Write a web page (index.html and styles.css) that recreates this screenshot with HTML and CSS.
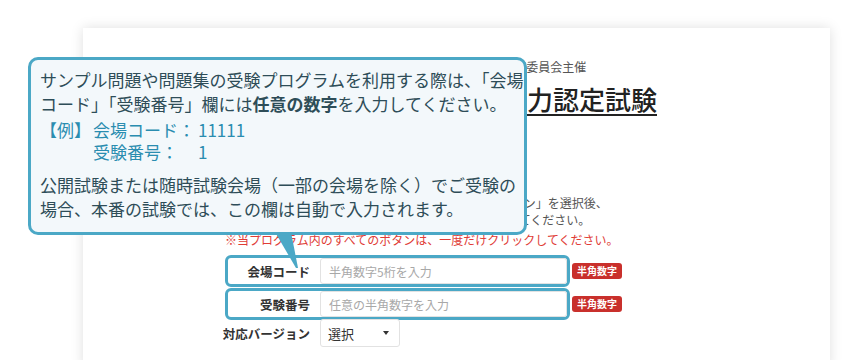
FILE: index.html
```html
<!DOCTYPE html>
<html lang="ja">
<head>
<meta charset="utf-8">
<title>受験プログラム</title>
<link rel="stylesheet" href="styles.css">
</head>
<body>
<div class="page">
  <div class="card">
    <div class="head">
      <p class="sponsor">サーティファイ情報処理能力認定委員会主催</p>
      <h1 class="title"><span>情報処理技術者能力認定試験</span></h1>
    </div>
    <div class="guide">
      <p class="info">「会場コード」「受験番号」を入力して、「対応バージョン」を選択後、<br>画面の内容を確認し、「試験開始」ボタンをクリックしてください。</p>
      <p class="warn">※当プログラム内のすべてのボタンは、一度だけクリックしてください。</p>
    </div>
    <div class="form">
      <div class="row row-first">
        <div class="hl">
          <label class="lbl">会場コード</label>
          <input class="inp" type="text" placeholder="半角数字5桁を入力">
        </div>
        <span class="badge">半角数字</span>
      </div>
      <div class="row">
        <div class="hl">
          <label class="lbl">受験番号</label>
          <input class="inp" type="text" placeholder="任意の半角数字を入力">
        </div>
        <span class="badge">半角数字</span>
      </div>
      <div class="row row-plain">
        <label class="lbl lbl-wide">対応バージョン</label>
        <div class="select"><span>選択</span><span class="caret"></span></div>
      </div>
    </div>
  </div>

  <div class="callout">
    <p class="c-text">サンプル問題や問題集の受験プログラムを利用する際は、「会場<br>コード」「受験番号」欄には<strong>任意の数字</strong>を入力してください。</p>
    <div class="example">
      <span>【例】</span><span>会場コード：</span><span>11111</span>
      <span></span><span>受験番号：</span><span>1</span>
    </div>
    <p class="c-text c-last">公開試験または随時試験会場（一部の会場を除く）でご受験の<br>場合、本番の試験では、この欄は自動で入力されます。</p>
  </div>
  <svg class="tail" width="32" height="38" viewBox="0 0 32 38">
    <polygon points="5,0 21,0 28,36 26,36" fill="#4ba8c6"/>
  </svg>
</div>
</body>
</html>
```

FILE: styles.css
```css
* { box-sizing: border-box; }

html, body {
  margin: 0;
  padding: 0;
  background: #ffffff;
  overflow: hidden;
}

body {
  font-family: "Noto Sans CJK JP", "Noto Sans", sans-serif;
  color: #333;
}

.page {
  position: relative;
  width: 860px;
  height: 360px;
  overflow: hidden;
  padding: 28px 0 0 83px;
}

.card {
  width: 747px;
  height: 340px;
  background: #fff;
  box-shadow: 0 0 12px rgba(0, 0, 0, 0.13);
  padding-top: 31px;
}

.head p, .head h1, .guide p { margin: 0; }

.sponsor {
  padding-left: 264px;
  font-size: 12px;
  line-height: 16px;
  color: #555;
}

.title {
  padding-left: 236px;
  margin-top: 9px !important;
  font-size: 26px;
  font-weight: 500;
  line-height: 30px;
  color: #222;
}

.title span {
  display: inline-block;
  border-bottom: 2px solid #222;
}

.guide {
  margin-top: 78px;
  padding-left: 142px;
  font-size: 12px;
  line-height: 17px;
  color: #555;
}

.warn {
  margin-top: 3px !important;
  color: #e03c36;
}

.form {
  margin-top: 6px;
  padding-left: 139px;
  display: flex;
  flex-direction: column;
}

.row {
  display: flex;
  align-items: center;
  margin-top: 1px;
}

.row-plain { margin-top: -1px; }

.hl {
  display: flex;
  align-items: center;
  margin-left: 3px;
  border: 3px solid #4ba8c6;
  border-radius: 6px;
  height: 32px;
}

.lbl {
  width: 82px;
  text-align: right;
  white-space: nowrap;
  font-size: 12.5px;
  font-weight: 700;
  color: #333;
  margin-right: 10px;
}

.lbl-wide { width: 88px; }

.inp {
  width: 247px;
  height: 26px;
  border: 1px solid #e2e2e2;
  border-radius: 3px;
  padding: 0 8px;
  font-family: "Noto Sans CJK JP", "Noto Sans", sans-serif;
  font-size: 12px;
  color: #555;
  background: #fff;
  outline: none;
}

.inp::placeholder { color: #a8a8a8; }

.badge {
  margin-left: 2px;
  height: 16px;
  padding: 0 5px;
  background: #c9302c;
  border-radius: 3px;
  color: #fff;
  font-size: 10px;
  font-weight: 700;
  line-height: 16px;
  white-space: nowrap;
}

.select {
  width: 80px;
  height: 28px;
  border: 1px solid #e2e2e2;
  border-radius: 3px;
  background: #fff;
  display: flex;
  align-items: center;
  justify-content: space-between;
  padding: 0 10px 0 7px;
  font-size: 13px;
  color: #333;
}

.caret {
  width: 0;
  height: 0;
  border-top: 4px solid #333;
  border-left: 3px solid transparent;
  border-right: 3px solid transparent;
}

.callout {
  position: absolute;
  left: 28px;
  top: 57px;
  width: 499px;
  height: 178px;
  background: #f3f8fb;
  border: 3px solid #4ba8c6;
  border-radius: 10px;
  padding: 8px 6px 0 9px;
  font-size: 17px;
  color: #2e4d58;
}

.c-text {
  margin: 0;
  line-height: 23.5px;
  white-space: nowrap;
}

.c-text strong { font-weight: 700; }

.example {
  display: grid;
  grid-template-columns: auto auto auto;
  justify-content: start;
  column-gap: 0;
  margin-top: 4px;
  line-height: 22px;
  white-space: nowrap;
  color: #2a8db0;
}

.example span:nth-child(2), .example span:nth-child(5) { padding-left: 2px; }

.example span:nth-child(3), .example span:nth-child(6) { padding-left: 3px; }

.c-last { margin-top: 10px; }

.tail {
  position: absolute;
  left: 270px;
  top: 232px;
}
```
